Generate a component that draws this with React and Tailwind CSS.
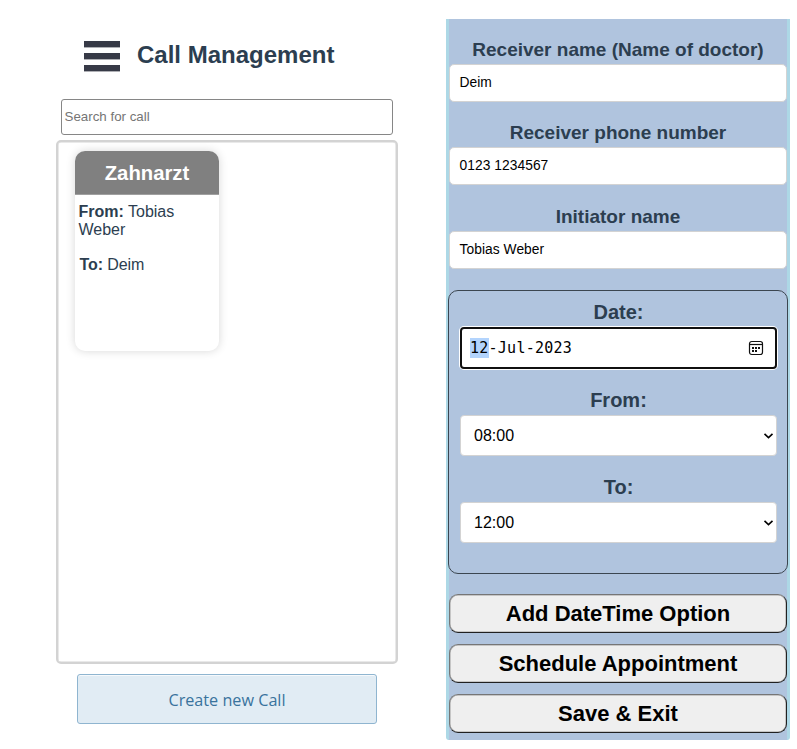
function Field({ label, value, className }) {
  return (
    <div className={`flex flex-col ${className}`}>
      <label className="h-7 text-center text-[19px] font-bold leading-7 text-[#2c3e50] whitespace-nowrap">
        {label}
      </label>
      <div className="flex h-[38px] items-center rounded-[5px] border border-[#d3d3d3] bg-white px-[9.5px] pt-px text-[13.8px] tracking-[0.05px] text-black">
        {value}
      </div>
    </div>
  );
}

function TimeSelect({ label, value, className }) {
  return (
    <div className={`flex flex-col ${className}`}>
      <label className="h-7 text-center text-[20px] font-bold leading-7 text-[#2c3e50]">{label}</label>
      <div className="mt-px flex h-[41px] items-center justify-between rounded-[4px] border border-[#d3d3d3] bg-white pl-[13px] pr-[2px] text-[16px] text-black">
        <span>{value}</span>
        <svg width="11" height="8" viewBox="0 0 11 8" fill="none">
          <path d="M1.5 1.8 5.5 5.6 9.5 1.8" stroke="#000" strokeWidth="1.6" />
        </svg>
      </div>
    </div>
  );
}

function ActionButton({ children }) {
  return (
    <button className="h-[39px] w-full rounded-[9px] border border-t-[#767676] border-l-[#767676] border-r-[#212121] border-b-[#212121] bg-[#efefef] text-center text-[22px] font-bold leading-[36px] text-black shadow-[inset_0_0_0_0.5px_rgba(60,60,60,0.45)]">
      {children}
    </button>
  );
}

function CalendarIcon() {
  return (
    <svg width="16" height="16" viewBox="0 0 16 16" fill="none">
      <rect x="1.5" y="1.5" width="13" height="13" rx="2.2" stroke="#111" strokeWidth="1.2" />
      <path d="M1.5 4.5h13" stroke="#111" strokeWidth="1.2" />
      <path
        d="M4 7h2v2H4zM7 7h2v2H7zM10 7h2v2h-2zM4 10h2v2H4zM7 10h2v2H7z"
        fill="#111"
      />
    </svg>
  );
}

export default function App() {
  return (
    <div className="flex h-[749px] w-[797px] items-start overflow-hidden bg-white font-['Liberation_Sans',Arial,sans-serif]">
      <section className="ml-14 flex w-[342px] flex-col">
        <header className="flex h-[99px] items-start pl-7 pt-[41px]">
          <div className="flex flex-col gap-[6px]">
            <span className="h-[6px] w-9 bg-[#373a47] shadow-[0_1px_0_rgba(55,58,71,0.4)]" />
            <span className="h-[6px] w-9 bg-[#373a47] shadow-[0_1px_0_rgba(55,58,71,0.4)]" />
            <span className="h-[6px] w-9 bg-[#373a47] shadow-[0_1px_0_rgba(55,58,71,0.4)]" />
          </div>
          <h1 className="ml-[17px] text-[24px] font-bold leading-7 text-[#2c3e50]">Call Management</h1>
        </header>
        <div className="mx-[5px] flex h-9 items-center rounded-[3px] border border-[#868686] px-[2.5px] pb-px text-[13.33px] text-[#757575]">
          Search for call
        </div>
        <div className="mt-[5px] h-[524px] rounded-[5px] border-2 border-[#d3d3d3] pl-[17px] pt-[9px] shadow-[inset_0_0_0_0.5px_#d3d3d3]">
          <article className="h-[200px] w-36 overflow-hidden rounded-[10px] bg-white shadow-[0_0_10px_rgba(0,0,0,0.16)]">
            <h2 className="h-11 border-b border-[#a0a0a0] bg-[#808080] text-center text-[20.3px] font-bold leading-[44px] text-white">
              Zahnarzt
            </h2>
            <p className="mt-2 pl-[3.5px] pr-6 text-[16px] leading-[18px] text-[#2c3e50]">
              <b>From:</b> Tobias Weber
            </p>
            <p className="mt-[17px] pl-[4.5px] text-[16px] leading-[18px] tracking-[-0.1px] text-[#2c3e50]">
              <b>To:</b> Deim
            </p>
          </article>
        </div>
        <button className="ml-[21px] mt-[10px] h-[50px] w-[300px] rounded-[3px] border border-[#8fb5d0] bg-[#e1ecf4] pt-0.5 font-['Open_Sans',sans-serif] text-[16.2px] text-[#39739d] shadow-[inset_0_1px_0_rgba(255,255,255,0.7)]">
          Create new Call
        </button>
      </section>

      <form className="ml-12 mt-[19px] flex h-[721px] w-[344px] flex-col rounded-b-[3px] border-x-[3px] border-[#add8e6] bg-[#b0c4de]">
        <Field label="Receiver name (Name of doctor)" value="Deim" className="mt-[17px]" />
        <Field label="Receiver phone number" value="0123 1234567" className="mt-[17px]" />
        <Field label="Initiator name" value="Tobias Weber" className="mt-[18px]" />

        <div className="-mx-px mt-[21px] flex h-[284px] flex-col rounded-[10px] border border-[#3b4650] pl-[11px] pr-[10px]">
          <label className="mt-[7px] h-7 text-center text-[20px] font-bold leading-7 text-[#2c3e50]">Date:</label>
          <div className="mt-px flex h-[42px] items-center justify-between rounded-[4px] border-2 border-[#101010] bg-white pl-[8px] pr-[11px] font-['DejaVu_Sans_Mono',monospace] text-[15px] tracking-[0.25px] text-black shadow-[0_0_0_1px_#ffffff]">
            <span className="leading-5">
              <span className="inline-block bg-[#b3d4fd]">12</span>-Jul-2023
            </span>
            <CalendarIcon />
          </div>
          <TimeSelect label="From:" value="08:00" className="mt-[17px]" />
          <TimeSelect label="To:" value="12:00" className="mt-[17px]" />
        </div>

        <div className="mt-5 flex flex-col gap-[11px]">
          <ActionButton>Add DateTime Option</ActionButton>
          <ActionButton>Schedule Appointment</ActionButton>
          <ActionButton>Save &amp; Exit</ActionButton>
        </div>
      </form>
    </div>
  );
}
